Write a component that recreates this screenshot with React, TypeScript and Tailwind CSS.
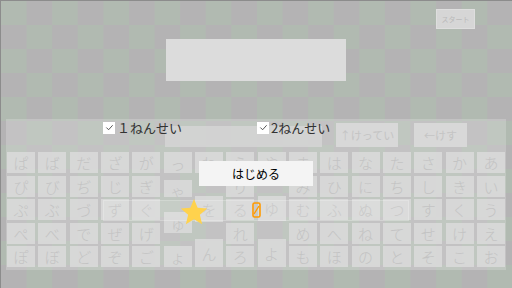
import React from 'react';

const font = { fontFamily: '"Noto Sans CJK JP", "Noto Sans", sans-serif' };

const regular: Record<number, string[]> = {
	0: ['ぱ', 'ぴ', 'ぷ', 'ぺ', 'ぽ'],
	1: ['ば', 'び', 'ぶ', 'べ', 'ぼ'],
	2: ['だ', 'ぢ', 'づ', 'で', 'ど'],
	3: ['ざ', 'じ', 'ず', 'ぜ', 'ぞ'],
	4: ['が', 'ぎ', 'ぐ', 'げ', 'ご'],
	7: ['ら', 'り', 'る', 'れ', 'ろ'],
	9: ['ま', 'み', 'む', 'め', 'も'],
	10: ['は', 'ひ', 'ふ', 'へ', 'ほ'],
	11: ['な', 'に', 'ぬ', 'ね', 'の'],
	12: ['た', 'ち', 'つ', 'て', 'と'],
	13: ['さ', 'し', 'す', 'せ', 'そ'],
	14: ['か', 'き', 'く', 'け', 'こ'],
	15: ['あ', 'い', 'う', 'え', 'お'],
};

const keyCls =
	'w-[28px] flex items-center justify-center bg-[#d9d9d9]/90 text-[#c3c3c3] text-[15px] font-light leading-none';

const Key = ({ ch, className = 'h-[21px]' }: { ch: string; className?: string }) => (
	<div className={`${keyCls} ${className}`}>{ch}</div>
);

const Column = ({ i }: { i: number }) => {
	if (i === 5) {
		// small kana, keys caught mid-slide
		return (
			<div className="flex flex-col w-[28px]">
				<div className={`${keyCls} h-[21px] items-start pt-[4px] text-[11px]`}>っ</div>
				<div className={`${keyCls} h-[17px] mt-[7px] items-start pt-[3px] text-[11px]`}>ゃ</div>
				<div className={`${keyCls} h-[21px] mt-[15px] items-start pt-[4px] text-[11px]`}>ゅ</div>
				<div className={`${keyCls} h-[21px] mt-[13px] items-start pt-[3px] text-[11px]`}>ょ</div>
			</div>
		);
	}
	if (i === 6) {
		return (
			<div className="flex flex-col w-[28px]">
				<Key ch="わ" />
				<Key ch="を" className="h-[26px] mt-[23px]" />
				<Key ch="ん" className="h-[28px] mt-[17px]" />
			</div>
		);
	}
	if (i === 8) {
		return (
			<div className="flex flex-col w-[28px]">
				<Key ch="や" />
				<Key ch="ゆ" className="h-[25px] mt-[23px]" />
				<Key ch="よ" className="h-[28px] mt-[18px]" />
			</div>
		);
	}
	return (
		<div className="flex flex-col gap-y-[2.5px] w-[28px]">
			{regular[i].map((ch) => (
				<Key key={ch} ch={ch} />
			))}
		</div>
	);
};

const Check = ({ label }: { label: string }) => (
	<div className="flex items-center gap-[2px]">
		<div className="w-[12px] h-[12px] bg-white flex items-center justify-center">
			<svg width="9" height="9" viewBox="0 0 10 10">
				<path d="M1.5 5 L4 7.5 L8.5 2.5" fill="none" stroke="#444" strokeWidth="1" />
			</svg>
		</div>
		<span className="text-[13px] leading-none text-[#333]">{label}</span>
	</div>
);

export default function App() {
	return (
		<div
			style={font}
			className="w-[512px] h-[288px] overflow-hidden border-t border-l border-[#8c8c8c] bg-[image:conic-gradient(#b4b3b4_25%,#b1bab1_0_50%,#b4b3b4_0_75%,#b1bab1_0)] bg-[length:51.2px_48px] flex flex-col"
		>
			<div className="flex justify-end pr-[37px] pt-[8px]">
				<div className="w-[39px] h-[20px] bg-[#d6d6d6] border border-[#dedede] flex items-center justify-center text-[7px] text-[#bababa]">
					スタート
				</div>
			</div>

			<div className="ml-[165px] mt-[10px] w-[180px] h-[42px] bg-[#dcdcdc]" />

			<div className="relative ml-[5px] mt-[38px] w-[500px] h-[151px] bg-white/20">
				{/* header */}
				<div className="flex items-start h-[33px]">
					<div className="ml-[159px] mt-[7px] w-[157px] h-[21px] bg-[#d4d4d4]/90" />
					<div className="ml-[14px] mt-[4px] w-[62px] h-[24px] bg-[#d8d8d8] flex items-center justify-center text-[11px] text-[#c4c4c4]">
						↑けってい
					</div>
					<div className="ml-[16px] mt-[4px] w-[53px] h-[24px] bg-[#d8d8d8] flex items-center justify-center text-[11px] text-[#c4c4c4]">
						←けす
					</div>
				</div>
				<div className="absolute left-[97px] top-[2px] flex">
					<div className="w-[154px]">
						<Check label="１ねんせい" />
					</div>
					<Check label="2ねんせい" />
				</div>

				{/* kana keys */}
				<div className="flex gap-x-[3.33px] pl-[1px]">
					{Array.from({ length: 16 }, (_, i) => (
						<Column key={i} i={i} />
					))}
				</div>

				<div className="absolute left-[97px] top-[81px] w-[306px] h-[21px] bg-white/10 border border-white/20" />

				<div className="absolute left-[193px] top-[42px] w-[114px] h-[25px] bg-[#f4f4f4] flex items-center justify-center text-[12px] text-black">
					はじめる
				</div>

				<svg className="absolute left-[173px] top-[78px]" width="30" height="30" viewBox="0 0 24 24">
					<path
						d="M12 1.5 L14.9 8.6 L22.6 9.2 L16.7 14.2 L18.5 21.8 L12 17.7 L5.5 21.8 L7.3 14.2 L1.4 9.2 L9.1 8.6 Z"
						fill="#ffd24d"
					/>
				</svg>

				<svg className="absolute left-[246px] top-[83px]" width="9" height="16" viewBox="0 0 9 16">
					<rect x="1" y="1" width="7" height="14" rx="1.5" fill="none" stroke="#ff9a00" strokeWidth="1.6" />
					<path d="M7 4 L2 12" stroke="#ff9a00" strokeWidth="1.4" />
				</svg>
			</div>
		</div>
	);
}
